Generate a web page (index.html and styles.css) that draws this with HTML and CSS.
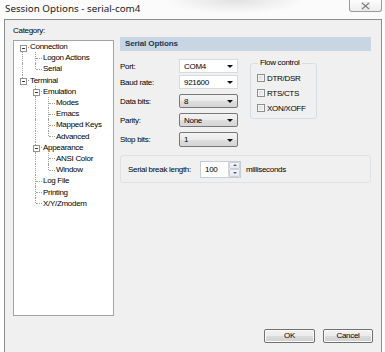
FILE: index.html
```html
<!DOCTYPE html>
<html>
<head>
<meta charset="utf-8">
<link rel="stylesheet" href="styles.css">
</head>
<body>
<div class="titlebar">
  <span class="title">Session Options - serial-com4</span>
  <div class="close"><svg width="9" height="8" viewBox="0 0 9 8"><path d="M1 1 L8 7 M8 1 L1 7" stroke="#7c7c7c" stroke-width="1.2" fill="none"/><rect x="0.5" y="0.5" width="8" height="7" fill="none" stroke="#b8b8b8" stroke-width="0.6" stroke-dasharray="1 1"/></svg></div>
</div>
<div class="window">
  <div class="main">
    <div class="leftcol">
      <div class="catlabel">Category:</div>
      <ul class="tree">
        <li class="row"><span class="c conn first"><span class="exp"></span></span><span class="t">Connection</span></li>
        <li class="row"><span class="c g"></span><span class="c conn mid"></span><span class="t">Logon Actions</span></li>
        <li class="row"><span class="c g"></span><span class="c conn"></span><span class="t">Serial</span></li>
        <li class="row"><span class="c conn"><span class="exp"></span></span><span class="t">Terminal</span></li>
        <li class="row"><span class="c"></span><span class="c conn mid"><span class="exp"></span></span><span class="t">Emulation</span></li>
        <li class="row"><span class="c"></span><span class="c g"></span><span class="c conn mid"></span><span class="t">Modes</span></li>
        <li class="row"><span class="c"></span><span class="c g"></span><span class="c conn mid"></span><span class="t">Emacs</span></li>
        <li class="row"><span class="c"></span><span class="c g"></span><span class="c conn mid"></span><span class="t">Mapped Keys</span></li>
        <li class="row"><span class="c"></span><span class="c g"></span><span class="c conn"></span><span class="t">Advanced</span></li>
        <li class="row"><span class="c"></span><span class="c conn mid"><span class="exp"></span></span><span class="t">Appearance</span></li>
        <li class="row"><span class="c"></span><span class="c g"></span><span class="c conn mid"></span><span class="t">ANSI Color</span></li>
        <li class="row"><span class="c"></span><span class="c g"></span><span class="c conn"></span><span class="t">Window</span></li>
        <li class="row"><span class="c"></span><span class="c conn mid"></span><span class="t">Log File</span></li>
        <li class="row"><span class="c"></span><span class="c conn mid"></span><span class="t">Printing</span></li>
        <li class="row"><span class="c"></span><span class="c conn"></span><span class="t">X/Y/Zmodem</span></li>
      </ul>
    </div>
    <div class="panel">
      <div class="header">Serial Options</div>
      <div class="settings">
        <div class="form">
          <div class="frow r-port"><span class="lbl">Port:</span><div class="combo edit"><span>COM4</span><i class="arrow"></i></div></div>
          <div class="frow r-baud"><span class="lbl">Baud rate:</span><div class="combo edit"><span>921600</span><i class="arrow"></i></div></div>
          <div class="frow r-list"><span class="lbl">Data bits:</span><div class="combo drop"><span>8</span><i class="arrow"></i></div></div>
          <div class="frow r-list"><span class="lbl">Parity:</span><div class="combo drop"><span>None</span><i class="arrow"></i></div></div>
          <div class="frow r-list r-stop"><span class="lbl">Stop bits:</span><div class="combo drop"><span>1</span><i class="arrow"></i></div></div>
        </div>
        <fieldset class="flow">
          <legend>Flow control</legend>
          <div class="chk"><span class="cb"></span><span>DTR/DSR</span></div>
          <div class="chk"><span class="cb"></span><span>RTS/CTS</span></div>
          <div class="chk"><span class="cb"></span><span>XON/XOFF</span></div>
        </fieldset>
      </div>
      <div class="breakgrp">
        <span class="blbl">Serial break length:</span>
        <div class="spin"><span class="sval">100</span><div class="sbtns"><span class="sb up"></span><span class="sb down"></span></div></div>
        <span class="unit">milliseconds</span>
      </div>
    </div>
  </div>
  <div class="buttons">
    <div class="btn ok">OK</div>
    <div class="btn cancel">Cancel</div>
  </div>
</div>
</body>
</html>
```
FILE: styles.css
```css
html, body {
  margin: 0;
  padding: 0;
}
body {
  width: 385px;
  height: 352px;
  overflow: hidden;
  background: #ffffff;
  font-family: "Liberation Sans", Arial, sans-serif;
  font-size: 8px;
  letter-spacing: -0.3px;
  color: #000;
}
.titlebar {
  height: 19px;
  display: flex;
  align-items: flex-start;
  background: radial-gradient(ellipse 70px 14px at 235px 0px, rgba(0,0,0,0.10), rgba(0,0,0,0) 100%), #fbfbfb;
}
.title {
  font-family: "Noto Sans", "Open Sans", sans-serif;
  font-size: 9.8px;
  letter-spacing: 0;
  line-height: 12px;
  margin: 3px 0 0 5px;
  color: #1a1a1a;
  white-space: nowrap;
}
.close {
  margin-left: auto;
  margin-right: 3px;
  width: 33px;
  height: 12px;
  box-sizing: border-box;
  border: 1px solid #9a9a9a;
  border-top: none;
  border-radius: 0 0 3px 3px;
  background: linear-gradient(#fdfdfd, #eeeeee);
  display: flex;
  align-items: center;
  justify-content: center;
}
.close svg { display: block; }
.window {
  margin: 0 3px 0 4px;
  height: 340px;
  box-sizing: border-box;
  border: 1px solid #8c8c8c;
  border-bottom: none;
  background: #f0f0f0;
  padding: 6px 8px 0 8px;
  display: flex;
  flex-direction: column;
}
.main {
  display: flex;
  gap: 6px;
}
.leftcol {
  width: 101px;
  display: flex;
  flex-direction: column;
}
.catlabel {
  height: 10px;
  line-height: 10px;
  margin-bottom: 4px;
  white-space: nowrap;
}
.tree {
  list-style: none;
  margin: 0;
  padding: 0 0 0 2px;
  height: 276px;
  box-sizing: border-box;
  border: 1px solid #a3a3a3;
  background: #ffffff;
}
.row {
  display: flex;
  align-items: center;
  height: 11.2px;
  white-space: nowrap;
}
.c {
  position: relative;
  width: 13px;
  height: 100%;
  flex: none;
}
.g::before {
  content: "";
  position: absolute;
  left: 6px;
  top: 0;
  height: 100%;
  border-left: 1px dotted #a0a0a0;
}
.conn::before {
  content: "";
  position: absolute;
  left: 6px;
  top: 0;
  height: 50%;
  border-left: 1px dotted #a0a0a0;
}
.conn.mid::before { height: 100%; }
.conn.first::before { top: 50%; height: 50%; }
.conn::after {
  content: "";
  position: absolute;
  left: 7px;
  top: 50%;
  width: 6px;
  border-top: 1px dotted #a0a0a0;
}
.exp {
  position: absolute;
  left: 4px;
  top: 50%;
  margin-top: -2px;
  width: 5px;
  height: 5px;
  border: 1px solid #939393;
  background: #ffffff;
  z-index: 1;
}
.exp::after {
  content: "";
  position: absolute;
  left: 1px;
  top: 2px;
  width: 3px;
  height: 1px;
  background: #3a3a3a;
}
.t {
  margin-left: 1px;
  line-height: 11px;
}
.panel {
  width: 251px;
  margin-top: 11px;
  margin-right: 2px;
  display: flex;
  flex-direction: column;
}
.header {
  height: 14px;
  line-height: 14px;
  padding-left: 5px;
  background: #c8d5e2;
  color: #22364f;
  font-weight: bold;
  font-size: 8px;
  letter-spacing: -0.1px;
}
.settings {
  display: flex;
  margin-top: 8px;
}
.form {
  width: 118px;
  display: flex;
  flex-direction: column;
}
.frow {
  display: flex;
  align-items: center;
  height: 14px;
}
.r-baud { margin-top: 2px; }
.r-list { margin-top: 5px; }
.r-stop { height: 15px; }
.lbl {
  width: 59px;
  flex: none;
}
.combo {
  position: relative;
  width: 59px;
  height: 100%;
  box-sizing: border-box;
  display: flex;
  align-items: center;
  padding-left: 4px;
}
.combo.edit {
  background: #ffffff;
  border: 1px solid #d6dbe0;
}
.combo.drop {
  background: linear-gradient(#f3f3f3, #ebebeb 50%, #dedede 51%, #d6d6d6);
  border: 1px solid #777777;
  border-radius: 2px;
}
.arrow {
  position: absolute;
  right: 4px;
  top: 50%;
  margin-top: -1px;
  width: 0;
  height: 0;
  border-left: 3px solid transparent;
  border-right: 3px solid transparent;
  border-top: 3px solid #111;
}
.flow {
  margin: -1px 0 0 12px;
  padding: 0 0 0 6px;
  width: 67px;
  height: 61px;
  box-sizing: border-box;
  border: 1px solid #d6dde3;
  border-radius: 3px;
  min-width: 0;
}
.flow legend {
  padding: 0 2px;
  margin-left: 1px;
  line-height: 10px;
  font-size: 8px;
}
.chk {
  display: flex;
  align-items: center;
  height: 10px;
  margin-top: 5px;
  gap: 2px;
  white-space: nowrap;
}
.cb {
  width: 8px;
  height: 8px;
  box-sizing: border-box;
  border: 1px solid #8e8f8f;
  background: linear-gradient(135deg, #d9d9d9, #f6f6f6);
  box-shadow: inset 0 0 0 1px #f4f4f4;
  flex: none;
}
.breakgrp {
  margin-top: 8px;
  height: 28px;
  width: 251px;
  box-sizing: border-box;
  border: 1px solid #dde2e7;
  border-radius: 3px;
  display: flex;
  align-items: center;
  padding-left: 7px;
}
.blbl {
  width: 72px;
  flex: none;
  white-space: nowrap;
}
.spin {
  width: 41px;
  height: 17px;
  box-sizing: border-box;
  border: 1px solid #c8cdd3;
  background: #ffffff;
  display: flex;
  align-items: center;
  padding-left: 4px;
}
.sval { flex: 1; }
.sbtns {
  width: 11px;
  height: 15px;
  display: flex;
  flex-direction: column;
  border-left: 1px solid #d0d6dc;
}
.sb {
  position: relative;
  flex: 1;
  background: linear-gradient(#f6f7f9, #e4e8ec);
  border: 1px solid #c9d0d8;
  border-radius: 1px;
}
.sb::after {
  content: "";
  position: absolute;
  left: 50%;
  top: 50%;
  margin-left: -2px;
  margin-top: -1px;
  width: 0;
  height: 0;
  border-left: 2px solid transparent;
  border-right: 2px solid transparent;
}
.sb.up::after { border-bottom: 2px solid #4a6381; }
.sb.down::after { border-top: 2px solid #4a6381; }
.unit {
  margin-left: 5px;
  white-space: nowrap;
}
.buttons {
  display: flex;
  justify-content: flex-end;
  gap: 8px;
  margin-top: 13px;
}
.btn {
  height: 14px;
  box-sizing: border-box;
  border: 1px solid #707070;
  border-radius: 2px;
  background: linear-gradient(#f2f2f2, #ebebeb 50%, #dddddd 51%, #cfcfcf);
  box-shadow: inset 0 0 0 1px #fbfbfb;
  display: flex;
  align-items: center;
  justify-content: center;
  line-height: 12px;
}
.ok { width: 51px; }
.cancel { width: 50px; }
```
